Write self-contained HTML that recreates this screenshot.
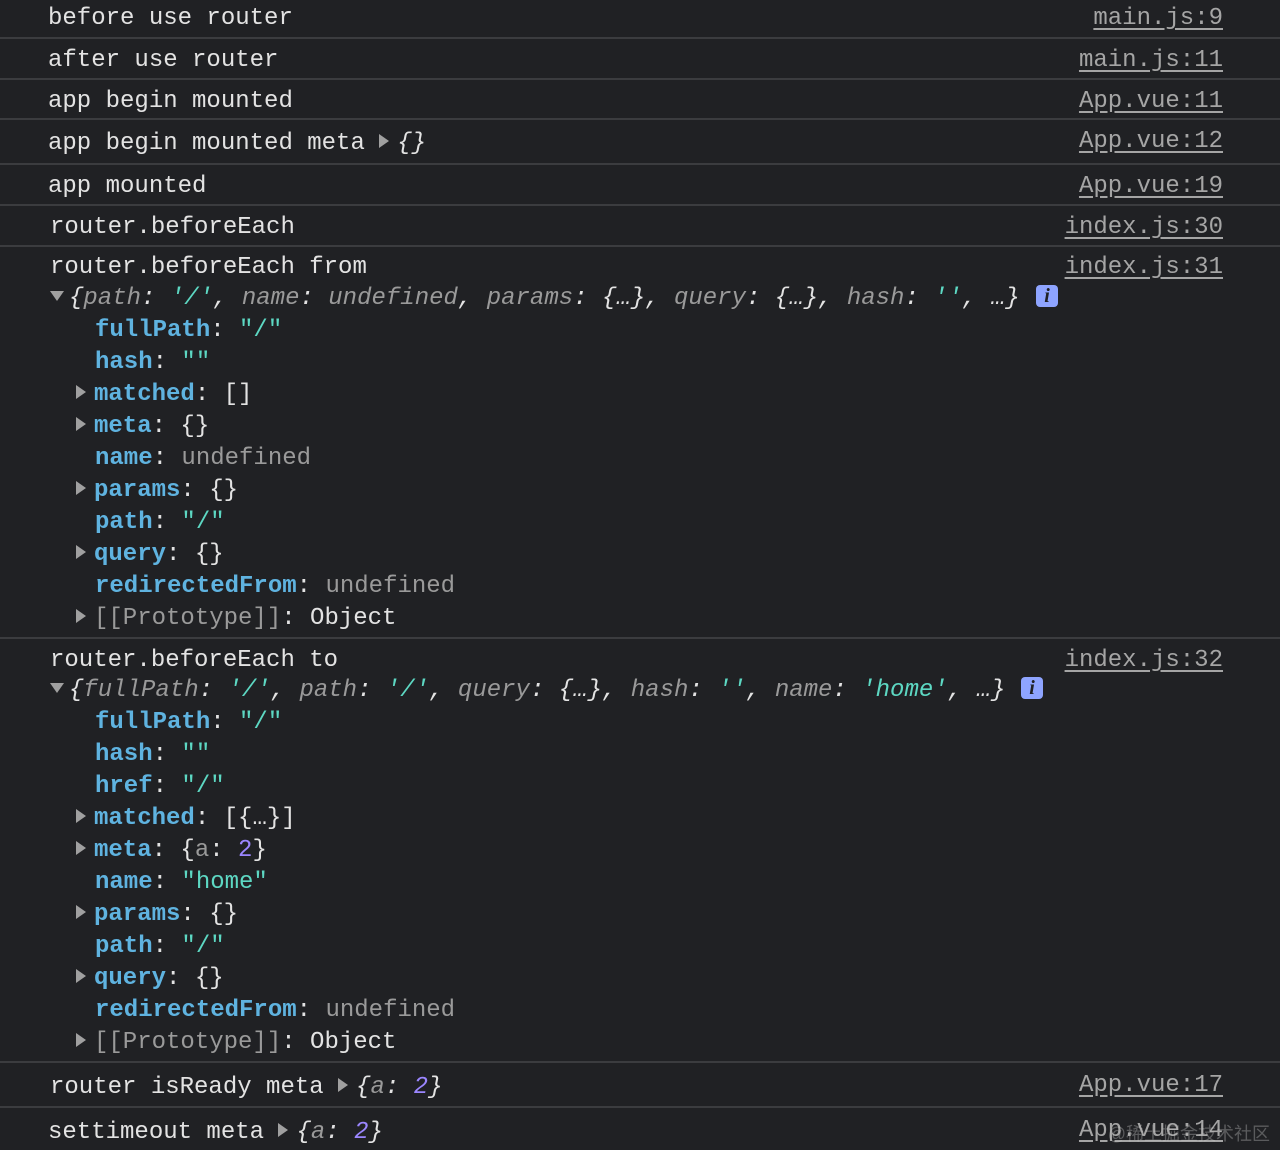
<!DOCTYPE html>
<html><head><meta charset="utf-8"><style>
html,body{margin:0;padding:0;background:#202124;}
body{width:1280px;height:1150px;position:relative;overflow:hidden;font-family:"Liberation Mono","DejaVu Sans Mono",monospace;font-size:24px;color:#e3e3e3;}
.l{position:absolute;height:32px;line-height:32px;white-space:pre;margin-top:2px;}
.r{position:absolute;right:57px;height:32px;line-height:32px;color:#a5a5a5;text-decoration:underline;text-underline-offset:4px;white-space:pre;margin-top:2px;}
.s{position:absolute;left:0;width:1280px;height:2px;background:#3b3c3f;}
.k{color:#5fb3e0;font-weight:bold;}
.g{color:#9a9a9a;}
.i{font-style:italic;}
.st{color:#5dd8c3;}
.n{color:#9b86ff;}
.t{display:inline-block;width:0;height:0;border-top:7px solid transparent;border-bottom:7px solid transparent;border-left:10px solid #a0a0a0;margin-right:8px;vertical-align:middle;position:relative;top:-2px;}
.td{display:inline-block;width:0;height:0;border-left:7px solid transparent;border-right:7px solid transparent;border-top:10px solid #a0a0a0;margin-right:5px;vertical-align:middle;position:relative;top:-2px;}
.info{position:absolute;width:22px;height:22px;background:#8ea4ff;border-radius:4px;color:#202124;font-family:"Liberation Serif",serif;font-style:italic;font-weight:bold;font-size:20px;line-height:22px;text-align:center;}
.wm{position:absolute;right:10px;top:1120px;font-family:"Liberation Sans","Noto Sans CJK SC",sans-serif;font-size:18px;color:rgba(200,200,200,0.35);}
</style></head><body>
<div class="l" style="left:48px;top:1px">before use router</div><div class="r" style="top:1px">main.js:9</div>
<div class="s" style="top:37px"></div>
<div class="l" style="left:48px;top:43px">after use router</div><div class="r" style="top:43px">main.js:11</div>
<div class="s" style="top:78px"></div>
<div class="l" style="left:48px;top:84px">app begin mounted</div><div class="r" style="top:84px">App.vue:11</div>
<div class="s" style="top:118px"></div>
<div class="l" style="left:48px;top:126px">app begin mounted meta <span class="t"></span><span class="i">{}</span></div><div class="r" style="top:124px">App.vue:12</div>
<div class="s" style="top:163px"></div>
<div class="l" style="left:48px;top:169px">app mounted</div><div class="r" style="top:169px">App.vue:19</div>
<div class="s" style="top:204px"></div>
<div class="l" style="left:50px;top:210px">router.beforeEach</div><div class="r" style="top:210px">index.js:30</div>
<div class="s" style="top:245px"></div>
<div class="l" style="left:50px;top:250px">router.beforeEach from</div><div class="r" style="top:250px">index.js:31</div>
<div class="l" style="left:50px;top:281px"><span class="td"></span><span class="i">{<span class="g">path</span>: <span class="st">'/'</span>, <span class="g">name</span>: <span class="g">undefined</span>, <span class="g">params</span>: {…}, <span class="g">query</span>: {…}, <span class="g">hash</span>: <span class="st">''</span>, …}</span></div>
<div class="info" style="left:1036px;top:285px">i</div>
<div class="l" style="left:95px;top:313px"><span class="k">fullPath</span>: <span class="st">"/"</span></div>
<div class="l" style="left:95px;top:345px"><span class="k">hash</span>: <span class="st">""</span></div>
<div class="l" style="left:76px;top:377px"><span class="t"></span><span class="k">matched</span>: []</div>
<div class="l" style="left:76px;top:409px"><span class="t"></span><span class="k">meta</span>: {}</div>
<div class="l" style="left:95px;top:441px"><span class="k">name</span>: <span class="g">undefined</span></div>
<div class="l" style="left:76px;top:473px"><span class="t"></span><span class="k">params</span>: {}</div>
<div class="l" style="left:95px;top:505px"><span class="k">path</span>: <span class="st">"/"</span></div>
<div class="l" style="left:76px;top:537px"><span class="t"></span><span class="k">query</span>: {}</div>
<div class="l" style="left:95px;top:569px"><span class="k">redirectedFrom</span>: <span class="g">undefined</span></div>
<div class="l" style="left:76px;top:601px"><span class="t"></span><span class="g">[[Prototype]]</span>: Object</div>
<div class="s" style="top:637px"></div>
<div class="l" style="left:50px;top:643px">router.beforeEach to</div><div class="r" style="top:643px">index.js:32</div>
<div class="l" style="left:50px;top:673px"><span class="td"></span><span class="i">{<span class="g">fullPath</span>: <span class="st">'/'</span>, <span class="g">path</span>: <span class="st">'/'</span>, <span class="g">query</span>: {…}, <span class="g">hash</span>: <span class="st">''</span>, <span class="g">name</span>: <span class="st">'home'</span>, …}</span></div>
<div class="info" style="left:1021px;top:677px">i</div>
<div class="l" style="left:95px;top:705px"><span class="k">fullPath</span>: <span class="st">"/"</span></div>
<div class="l" style="left:95px;top:737px"><span class="k">hash</span>: <span class="st">""</span></div>
<div class="l" style="left:95px;top:769px"><span class="k">href</span>: <span class="st">"/"</span></div>
<div class="l" style="left:76px;top:801px"><span class="t"></span><span class="k">matched</span>: [{…}]</div>
<div class="l" style="left:76px;top:833px"><span class="t"></span><span class="k">meta</span>: {<span class="g">a</span>: <span class="n">2</span>}</div>
<div class="l" style="left:95px;top:865px"><span class="k">name</span>: <span class="st">"home"</span></div>
<div class="l" style="left:76px;top:897px"><span class="t"></span><span class="k">params</span>: {}</div>
<div class="l" style="left:95px;top:929px"><span class="k">path</span>: <span class="st">"/"</span></div>
<div class="l" style="left:76px;top:961px"><span class="t"></span><span class="k">query</span>: {}</div>
<div class="l" style="left:95px;top:993px"><span class="k">redirectedFrom</span>: <span class="g">undefined</span></div>
<div class="l" style="left:76px;top:1025px"><span class="t"></span><span class="g">[[Prototype]]</span>: Object</div>
<div class="s" style="top:1061px"></div>
<div class="l" style="left:50px;top:1070px">router isReady meta <span class="t"></span><span class="i">{<span class="g">a</span>: <span class="n">2</span>}</span></div><div class="r" style="top:1068px">App.vue:17</div>
<div class="s" style="top:1106px"></div>
<div class="l" style="left:48px;top:1115px">settimeout meta <span class="t"></span><span class="i">{<span class="g">a</span>: <span class="n">2</span>}</span></div><div class="r" style="top:1113px">App.vue:14</div>
<div class="wm">@稀土掘金技术社区</div>
</body></html>
